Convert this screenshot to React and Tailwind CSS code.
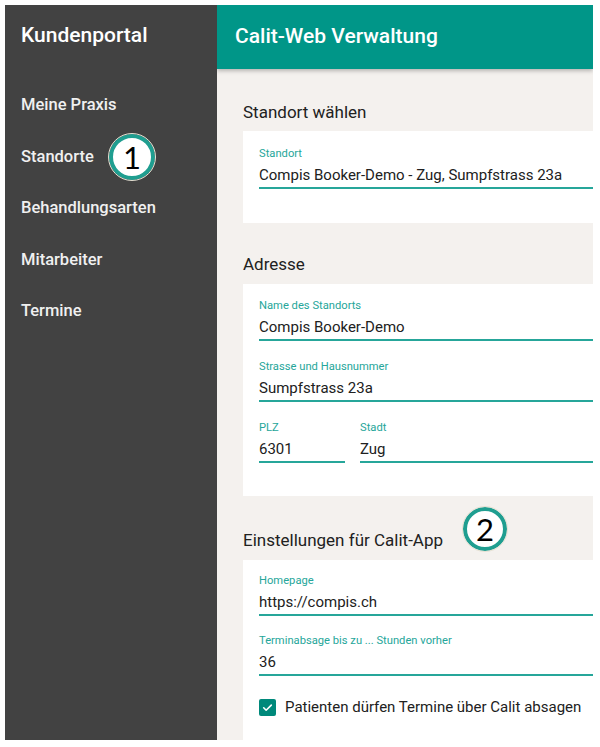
import React from "react";

function Field({ label, value, className = "" }) {
  return (
    <div className={className}>
      <div className="text-[11.2px] leading-[14px] text-[#26a69a]">{label}</div>
      <div className="mt-[3px] text-[15px] leading-[22px] pb-[1px] text-[#212121] border-b-2 border-[#26a69a]">
        {value}
      </div>
    </div>
  );
}

function Badge({ n, className }) {
  return (
    <div
      className={`absolute flex items-center justify-center rounded-full bg-white border-[4px] border-[#1f9e90] outline outline-1 outline-[#e6e1d3] ${className}`}
      style={{ fontFamily: "Lato, 'Open Sans', sans-serif" }}
    >
      <span className="text-[31px] leading-none text-black">{n}</span>
    </div>
  );
}

export default function App() {
  return (
    <div className="bg-white w-[600px] h-[747px] pt-[5px] pl-[5px]" style={{ fontFamily: "Roboto, 'Noto Sans', sans-serif" }}>
      <div className="relative flex w-[588px] h-[735px] overflow-hidden">
        <aside className="w-[212px] shrink-0 bg-[#424242] text-white">
          <div className="h-[62px] flex items-center pl-[16px] text-[21px] font-medium">Kundenportal</div>
          <nav className="mt-[13px] flex flex-col">
            {["Meine Praxis", "Standorte", "Behandlungsarten", "Mitarbeiter", "Termine"].map((t) => (
              <div key={t} className="h-[51.5px] flex items-center pl-[16px] text-[16.5px] font-medium text-[#f0f0f0]">
                {t}
              </div>
            ))}
          </nav>
        </aside>
        <main className="flex-1 bg-[#f4f1ee] flex flex-col overflow-hidden">
          <header className="relative z-10 shrink-0 h-[64px] bg-[#009688] flex items-center pl-[18px] text-white text-[21px] font-medium shadow-[0_2px_4px_rgba(0,0,0,0.25)]">
            Calit-Web Verwaltung
          </header>
          <div className="pl-[26px]">
            <section className="pt-[31px]">
              <h2 className="text-[17px] leading-[24px] text-[#212121] mb-[7px]">Standort wählen</h2>
              <div className="w-[420px] bg-white pt-[16px] pb-[34px] pl-[16px]">
                <Field label="Standort" value="Compis Booker-Demo - Zug, Sumpfstrass 23a" />
              </div>
            </section>
            <section className="pt-[29px]">
              <h2 className="text-[17px] leading-[24px] text-[#212121] mb-[8px]">Adresse</h2>
              <div className="w-[420px] bg-white pt-[15px] pb-[33px] pl-[16px]">
                <Field label="Name des Standorts" value="Compis Booker-Demo" />
                <Field className="mt-[19px]" label="Strasse und Hausnummer" value="Sumpfstrass 23a" />
                <div className="mt-[19px] flex gap-[15px]">
                  <Field className="w-[86px]" label="PLZ" value="6301" />
                  <Field className="flex-1" label="Stadt" value="Zug" />
                </div>
              </div>
            </section>
            <section className="pt-[32px]">
              <h2 className="text-[17px] leading-[24px] text-[#212121] mb-[8px]">Einstellungen für Calit-App</h2>
              <div className="w-[420px] bg-white pt-[14px] pb-[30px] pl-[16px]">
                <Field label="Homepage" value="https://compis.ch" />
                <Field className="mt-[18px]" label="Terminabsage bis zu ... Stunden vorher" value="36" />
                <div className="mt-[20px] flex items-center gap-[9px]">
                  <div className="w-[17px] h-[17px] rounded-[2px] bg-[#00897b] flex items-center justify-center">
                    <svg width="13" height="13" viewBox="0 0 24 24" fill="none" stroke="white" strokeWidth="3" strokeLinecap="round" strokeLinejoin="round">
                      <path d="M5 12.5l4.5 4.5L19 7.5" />
                    </svg>
                  </div>
                  <span className="text-[15px] leading-[22px] text-[#212121]">Patienten dürfen Termine über Calit absagen</span>
                </div>
              </div>
            </section>
          </div>
        </main>
        <Badge n="1" className="w-[46px] h-[46px] left-[104px] top-[129px]" />
        <Badge n="2" className="w-[44px] h-[44px] left-[458px] top-[502px]" />
      </div>
    </div>
  );
}
